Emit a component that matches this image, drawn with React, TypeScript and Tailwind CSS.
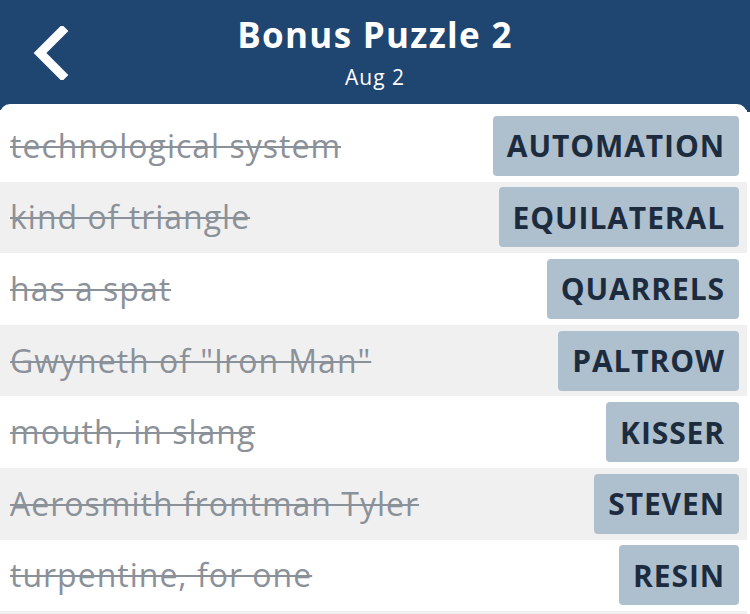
import React from 'react';

type Clue = { clue: string; answer: string };

const clues: Clue[] = [
  { clue: 'technological system', answer: 'AUTOMATION' },
  { clue: 'kind of triangle', answer: 'EQUILATERAL' },
  { clue: 'has a spat', answer: 'QUARRELS' },
  { clue: 'Gwyneth of "Iron Man"', answer: 'PALTROW' },
  { clue: 'mouth, in slang', answer: 'KISSER' },
  { clue: 'Aerosmith frontman Tyler', answer: 'STEVEN' },
  { clue: 'turpentine, for one', answer: 'RESIN' },
];

const BackIcon: React.FC = () => (
  <svg width="36" height="54" viewBox="0 0 36 54" fill="none">
    <path d="M29 5 L7 27 L29 49" stroke="white" strokeWidth="9" strokeLinecap="square" strokeLinejoin="miter" />
  </svg>
);

const App: React.FC = () => {
  return (
    <div className="w-[750px] h-[614px] overflow-hidden bg-white font-['Open_Sans','Noto_Sans',sans-serif]">
      {/* Header */}
      <header className="relative h-[112px] bg-[#1f4571] text-white flex flex-col items-center pt-[11px]">
        <button className="absolute left-[33px] top-[26px]">
          <BackIcon />
        </button>
        <h1 className="text-[35px] font-bold leading-[48px] tracking-[1.3px]">Bonus Puzzle 2</h1>
        <p className="text-[21px] leading-[28px] mt-[4px] tracking-[1px]">Aug 2</p>
      </header>

      {/* Clue list */}
      <div className="relative -mt-[8px] w-[747px] bg-white rounded-t-[10px] pt-[6px]">
        {clues.map((c, i) => (
          <div
            key={c.answer}
            className={`h-[71.6px] flex items-center justify-between pl-[10px] pr-[8px] ${
              i % 2 === 1 ? 'bg-[#f0f0f0]' : 'bg-white'
            }`}
          >
            <span className="text-[32px] text-[#8b9199] line-through decoration-[2px] whitespace-nowrap tracking-[1px]">
              {c.clue}
            </span>
            <span className="h-[60px] flex items-center px-[14px] rounded-[4px] bg-[#aec0ce] text-[#1c2c3e] text-[30px] font-bold tracking-[0.9px]">
              {c.answer}
            </span>
          </div>
        ))}
        <div className="h-[72px] bg-[#f0f0f0]" />
      </div>
    </div>
  );
};

export default App;
